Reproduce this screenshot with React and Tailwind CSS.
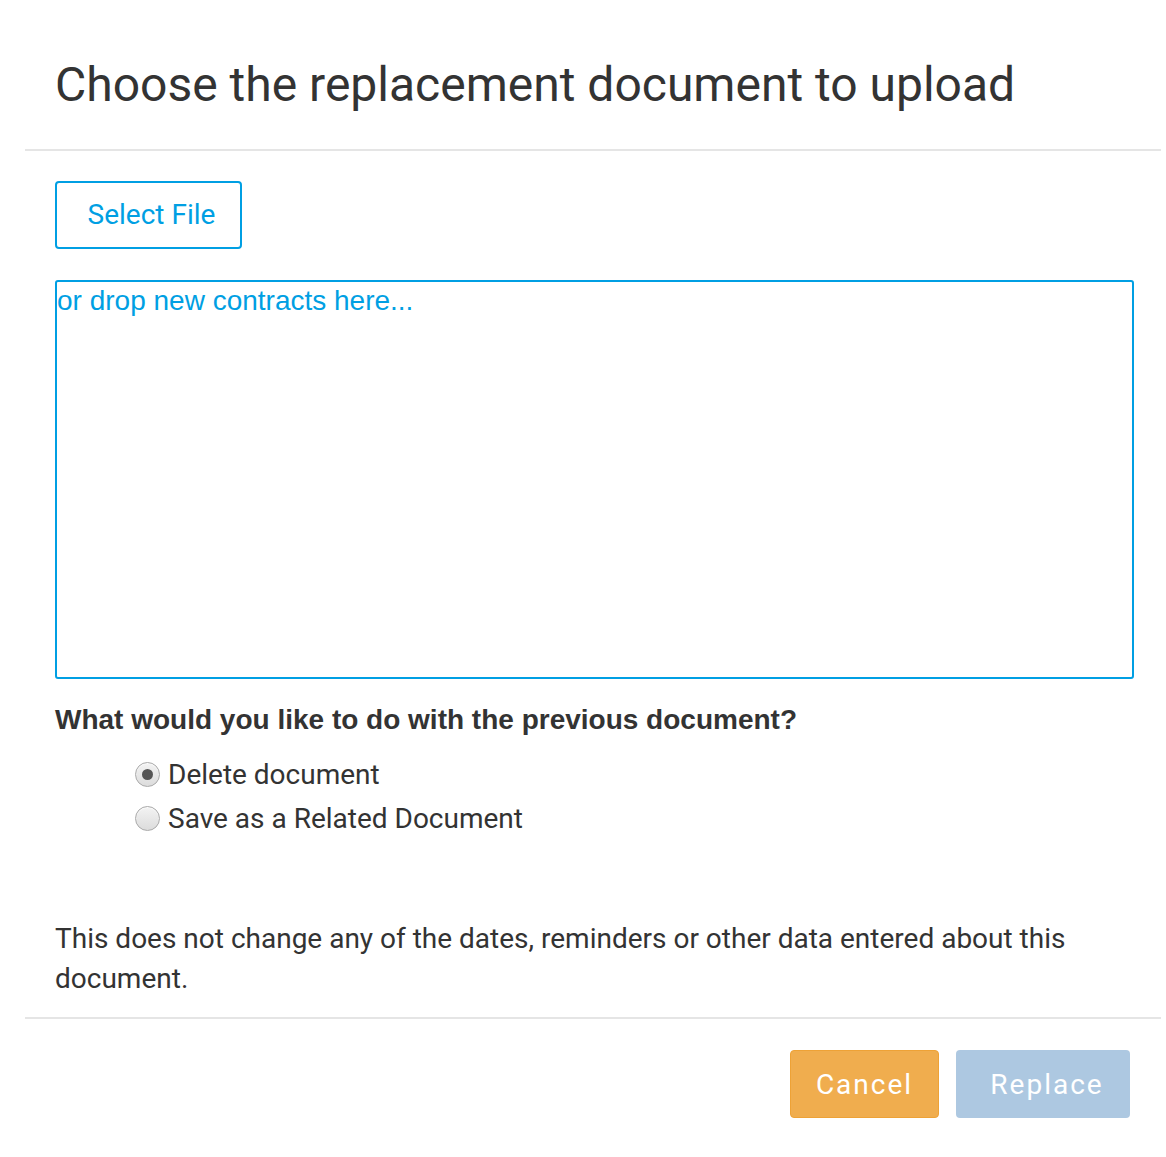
import React, { useState } from "react";

const Radio = ({ checked, label, onClick }) => (
  <label
    className="flex items-center gap-[8px] cursor-pointer h-[44px]"
    onClick={onClick}
  >
    <span className="w-[25px] h-[25px] rounded-full border border-[#a9a9a9] bg-gradient-to-b from-[#f3f3f3] to-[#dcdcdc] flex items-center justify-center shadow-[inset_0_1px_1px_rgba(255,255,255,0.8)]">
      {checked && (
        <span className="w-[11px] h-[11px] rounded-full bg-[#555]" />
      )}
    </span>
    <span className="text-[28px] text-[#333] pt-[2px]">{label}</span>
  </label>
);

const App = () => {
  const [choice, setChoice] = useState("delete");

  return (
    <div
      className="bg-white min-h-[1157px] w-[1166px]"
      style={{ fontFamily: "Roboto, 'Liberation Sans', sans-serif" }}
    >
      <div className="ml-[25px] w-[1136px]">
        <div className="h-[151px] border-b-2 border-[#e5e5e5] pl-[30px] pt-[55px]">
          <h1 className="text-[48px] leading-[60px] text-[#333] font-normal">
            Choose the replacement document to upload
          </h1>
        </div>

        <div className="pl-[30px] pr-[27px] pt-[30px]">
          <button className="w-[187px] h-[68px] border-2 border-[#009fe3] rounded-[4px] text-[28px] text-[#009fe3] bg-white pl-[6px]">
            Select File
          </button>

          <div
            className="mt-[31px] h-[399px] border-2 border-[#009fe3] rounded-[3px] text-[28px] leading-[38px] text-[#009fe3]"
            style={{ fontFamily: "'Liberation Sans', Arial, sans-serif" }}
          >
            or drop new contracts here...
          </div>

          <p
            className="mt-[23px] text-[28px] leading-[36px] font-bold text-[#333]"
            style={{ fontFamily: "'Liberation Sans', Arial, sans-serif" }}
          >
            What would you like to do with the previous document?
          </p>

          <div className="pl-[80px] mt-[14px]">
            <Radio
              checked={choice === "delete"}
              label="Delete document"
              onClick={() => setChoice("delete")}
            />
            <Radio
              checked={choice === "related"}
              label="Save as a Related Document"
              onClick={() => setChoice("related")}
            />
          </div>

          <p className="mt-[79px] text-[28px] leading-[40px] text-[#333] pb-[18px]">
            This does not change any of the dates, reminders or other data
            entered about this document.
          </p>
        </div>

        <div className="border-t-2 border-[#e5e5e5] flex justify-end gap-[17px] pr-[31px] pt-[31px]">
          <button className="w-[149px] h-[68px] bg-[#f0ad4e] border border-[#eea236] rounded-[4px] text-white text-[28px] tracking-[2px] pt-[2px]">
            Cancel
          </button>
          <button className="w-[174px] h-[68px] bg-[#adc8e1] rounded-[4px] text-white text-[28px] tracking-[2px] pl-[8px] pt-[2px]">
            Replace
          </button>
        </div>
      </div>
    </div>
  );
};

export default App;
